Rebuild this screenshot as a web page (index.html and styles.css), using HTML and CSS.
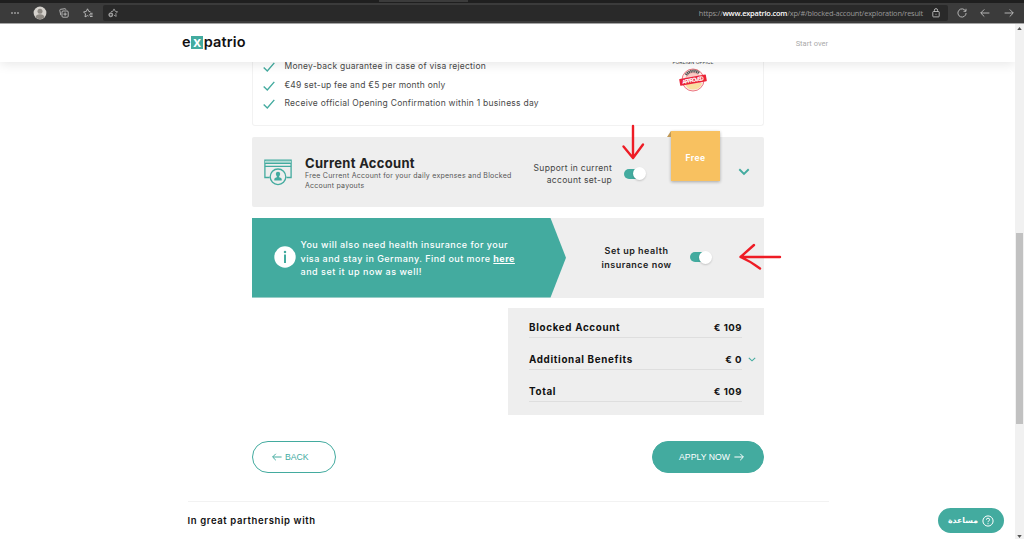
FILE: index.html
```html
<!DOCTYPE html>
<html lang="en">
<head>
<meta charset="utf-8">
<title>Expatrio</title>
<link rel="stylesheet" href="styles.css">
</head>
<body>
<div class="browser">
  <div class="tabs"><span class="tab"></span></div>
  <div class="toolbar">
    <svg class="ic dots" viewBox="0 0 10 10"><circle cx="2" cy="5" r=".8"/><circle cx="5" cy="5" r=".8"/><circle cx="8" cy="5" r=".8"/></svg>
    <svg class="avatar" viewBox="0 0 14 14"><circle cx="7" cy="7" r="6.4" fill="#d4d1cc"/><circle cx="7" cy="5.2" r="2.5" fill="#8d8983"/><path d="M2.6 11.6Q3 8.3 7 8.3T11.4 11.6Q7 15 2.6 11.6Z" fill="#8d8983"/></svg>
    <svg class="ic collections" viewBox="0 0 10 10"><rect x="3" y="3" width="6.2" height="6.2" rx="1"/><path d="M6.1 4.4v3.4M4.4 6.1h3.4M1.8 7.2 .8 2.4Q.7 1.5 1.6 1.3L6 .7q.8 0 .9 1"/></svg>
    <svg class="ic favorites" viewBox="0 0 10 10"><path d="M7.4 3.7 5.9 3.5 4.5.8 3.2 3.5.5 3.9l2 2-.5 3 2.5-1.3 1 .5M7 5.3h2.6M6 6.9h3.6M7 8.5h2.6"/></svg>
    <div class="address">
      <svg class="ic addfav" viewBox="0 0 10 10"><path d="M3 3.6 4.9 3.3 6 .9l1.2 2.4 2.4.4-1.8 1.9.4 2.8L6 7.2"/><circle cx="2.8" cy="6.8" r="2" fill="#aaa"/><path d="M2.8 5.7v2.2M1.7 6.8h2.2" stroke="#292929"/></svg>
      <span class="url">https://<b>www.expatrio.com</b>/xp/#/blocked-account/exploration/result</span>
      <svg class="ic lock" viewBox="0 0 10 10"><rect x="1.8" y="3.5" width="6.4" height="5.4" rx=".7"/><path d="M3.4 3.4V2.2a1.6 1.6 0 0 1 3.2 0v1.2M5 5.8v.9"/></svg>
    </div>
    <svg class="ic refresh" viewBox="0 0 10 10"><path d="M8.6 3A4.1 4.1 0 1 0 9.1 5M9 .8v2.5H6.5"/></svg>
    <svg class="ic back-nav" viewBox="0 0 10 10"><path d="M9.4 5H.9M4.3 1.4.7 5l3.6 3.6"/></svg>
    <svg class="ic next-nav" viewBox="0 0 10 10"><path d="M.6 5h8.5M5.7 1.4 9.3 5 5.7 8.6"/></svg>
  </div>
</div>

<div class="viewport">
  <div class="page">
    <header class="site-header">
      <div class="logo"><span>e</span><span class="logo-x">x</span><span>patrio</span></div>
      <span class="start-over">Start over</span>
    </header>

    <main class="content">
      <section class="benefits">
        <ul class="checks">
          <li><svg class="check" viewBox="0 0 12 10"><path d="M.7 5.5 4.3 8.9 11.3.9"/></svg><span class="c1">Money-back guarantee in case of visa rejection</span></li>
          <li><svg class="check" viewBox="0 0 12 10"><path d="M.7 5.5 4.3 8.9 11.3.9"/></svg><span class="c2">€49 set-up fee and €5 per month only</span></li>
          <li><svg class="check" viewBox="0 0 12 10"><path d="M.7 5.5 4.3 8.9 11.3.9"/></svg><span class="c3">Receive official Opening Confirmation within 1 business day</span></li>
        </ul>
        <div class="approval">
          <span class="office">FOREIGN OFFICE</span>
          <svg class="stamp" viewBox="0 0 30 26"><circle cx="15" cy="13" r="11" fill="#fde9e5" stroke="#ec7680"/><circle cx="15" cy="13" r="7.5" fill="#f9c9c4" stroke="#ef9797" stroke-width=".7"/><path d="M7 17a9 9 0 0 0 17-1Z" fill="#f9dda0"/><path d="M8 8a8.8 8.8 0 0 1 13-2" fill="none" stroke="#555" stroke-width="2.8" stroke-dasharray="1.4 .5"/><g transform="rotate(-10 15 13)"><rect x="1.5" y="9.7" width="27" height="6.8" rx=".6" fill="#eb2338"/><text x="15" y="15" text-anchor="middle" textLength="22" fill="#fff" font-size="5.4" font-weight="700">APPROVED</text></g></svg>
        </div>
      </section>

      <section class="account">
        <svg class="account-icon" viewBox="0 0 28 27"><path d="M5.700 18.500H.9V1.200h26.200v17.300h-4.700"/><path d="M1 2h26v2H1Z" fill="#b4ddd6" stroke="none"/><path d="M.9 4.300h26.200M.9 7.300h26.200"/><circle cx="14" cy="17.800" r="7.800" fill="#eee"/><circle cx="14" cy="15" r="2.200" fill="#43ab9f" stroke="none"/><path d="M10.300 21.500v-1.500q0-1.300 2.500-1.800v-2h2.400v2q2.500.5 2.500 1.800v1.500Z" fill="#43ab9f" stroke="none"/></svg>
        <div class="account-text">
          <h2>Current Account</h2>
          <p><span class="d1">Free Current Account for your daily expenses and Blocked</span><br><span class="d2">Account payouts</span></p>
        </div>
        <p class="support">Support in current<br>account set-up</p>
        <span class="toggle"><i></i></span>
        <svg class="chevron" viewBox="0 0 12 8"><path d="m1.3 1.3 4.7 4.6 4.7-4.6"/></svg>
        <div class="note">Free</div>
      </section>

      <section class="health">
        <div class="health-info">
          <svg class="info" viewBox="0 0 22 22"><circle cx="11" cy="11" r="10.7" fill="#fff"/><path d="M11 8.600v8.500" stroke="#43ab9f" stroke-width="2"/><circle cx="11" cy="6" r="1.250" fill="#43ab9f"/></svg>
          <p><span class="h1">You will also need health insurance for your</span><br><span class="h2">visa and stay in Germany. Find out more <a>here</a></span><br><span class="h3">and set it up now as well!</span></p>
        </div>
        <p class="setup">Set up health<br>insurance now</p>
        <span class="toggle"><i></i></span>
      </section>

      <section class="summary">
        <div class="row"><span class="label">Blocked Account</span><span>€ 109</span></div>
        <div class="row"><span class="label">Additional Benefits</span><span>€ 0</span><svg class="mini" viewBox="0 0 8 5"><path d="m.8.8 3.2 3 3.2-3"/></svg></div>
        <div class="row"><span class="label">Total</span><span>€ 109</span></div>
      </section>

      <div class="actions">
        <button class="btn outline"><svg viewBox="0 0 10 8"><path d="M9.600 4H.8M3.800.8.6 4l3.200 3.200"/></svg><span>BACK</span></button>
        <button class="btn solid"><span>APPLY NOW</span><svg viewBox="0 0 10 8"><path d="M.4 4h8.800M6.200.8 9.400 4 6.200 7.200"/></svg></button>
      </div>
    </main>

    <footer class="partners"><span>In great parthership with</span></footer>
  </div>
  <div class="scrollbar">
    <svg viewBox="0 0 6 4"><path d="M0 4 3 0l3 4Z"/></svg>
    <span class="thumb"></span>
    <svg viewBox="0 0 6 4"><path d="M0 0h6L3 4Z"/></svg>
  </div>
</div>

<svg class="mark mark-down" viewBox="0 0 24 36"><path d="M12 2v31M2.500 22.500 12 34M22 20.500 12 34"/></svg>
<svg class="mark mark-left" viewBox="0 0 44 28"><path d="M42 14H2.500M16 2 2.500 14M22 25.500Q12 18 2.500 14"/></svg>
<div class="help"><svg viewBox="0 0 12 12"><circle cx="6" cy="6" r="5.100"/><path d="M4.400 4.700Q4.400 3.200 6 3.200t1.600 1.500Q7.600 5.600 6.600 6 6 6.300 6 7.200M6 8.200v1"/></svg><span lang="ar" dir="rtl">مساعدة</span></div>
</body>
</html>
```
FILE: styles.css
```css
* { box-sizing: border-box; margin: 0; padding: 0; }
body { width: 1024px; height: 539px; overflow: hidden; display: flex; flex-direction: column; background: #fff; font-family: Inter, "Liberation Sans", sans-serif; color: #222; position: relative; white-space: nowrap; }
.browser { height: 24px; flex: none; border-bottom: 1px solid #a5a5a5; }
.tabs { height: 3px; background: #1f1f1f; display: flex; }
.tab { width: 89px; height: 2px; margin-left: 379px; background: #3b3b3b; }
.toolbar { height: 20px; background: #3b3b3b; display: flex; align-items: center; }
.ic { width: 10px; height: 10px; flex: none; fill: none; stroke: #d0d0d0; stroke-width: .8; }
.dots { margin-left: 10px; fill: #ddd; stroke: none; }
.avatar { width: 14px; height: 14px; margin-left: 13px; }
.collections { margin-left: 12px; }
.favorites { margin-left: 14px; }
.address { width: 845px; height: 16px; margin-left: 10px; background: #292929; border-radius: 2px; display: flex; align-items: center; }
.addfav { margin-left: 5px; stroke: #aaa; }
.url { margin-left: auto; margin-right: 8px; font: 7.400px "Open Sans", sans-serif; letter-spacing: -.17px; color: #999; }
.url b { color: #fff; font-weight: 600; }
.lock { margin-right: 7px; }
.refresh { margin-left: 9px; }
.back-nav { margin-left: 13px; }
.next-nav { margin-left: 14px; }
.viewport { flex: 1; display: flex; min-height: 0; }
.page { flex: 1; display: flex; flex-direction: column; }
.site-header { height: 38px; flex: none; padding: 0 187px 0 182px; display: flex; justify-content: space-between; align-items: center; background: #fff; box-shadow: 0 2px 12px rgba(0,0,0,.1); position: relative; z-index: 1; clip-path: inset(0 0 -16px 0); }
.logo { display: flex; align-items: center; font-size: 14.500px; font-weight: 600; line-height: 14px; color: #111; letter-spacing: .15px; margin-top: -2px; }
.logo-x { width: 12px; height: 13px; margin: 1px .5px 0; line-height: 12px; text-align: center; background: #43ab9f; color: #fff; letter-spacing: 0; }
.start-over { font: 7.500px Roboto, sans-serif; color: #aaa; margin-top: 1px; }
.content { width: 512px; margin-left: 252px; display: flex; flex-direction: column; }
.benefits { height: 64px; border: 1px solid #f2f2f2; border-top: 0; border-radius: 0 0 3px 3px; display: flex; justify-content: space-between; padding: 0 49px 0 10px; }
.checks { list-style: none; margin-top: -5px; font-size: 8.500px; color: #484848; }
.checks li { height: 18.600px; display: flex; align-items: center; gap: 9.500px; }
.check { width: 12px; height: 10px; margin-top: 2px; fill: none; stroke: #43ab9f; stroke-width: 1.400; }
.approval { width: 42px; margin-top: -3px; display: flex; flex-direction: column; align-items: center; font-size: 5px; line-height: 6px; color: #444; }
.stamp { width: 30px; height: 26px; margin-top: 2px; flex: none; }
.account { height: 70px; margin-top: 11px; background: #eee; border-radius: 2px; display: flex; align-items: center; position: relative; }
.account-icon { width: 28px; height: 27px; margin: 0 13px 0 12px; fill: none; stroke: #43ab9f; stroke-width: 1.300; }
.account-text { width: 210px; padding-top: 2px; }
.account-text h2 { font-size: 13px; line-height: 16px; font-weight: 700; letter-spacing: .3px; color: #222; }
.account-text p { font-size: 7px; line-height: 10px; color: #555; }
.support { width: 97px; font-size: 8.500px; line-height: 12px; text-align: right; letter-spacing: .3px; color: #444; margin-top: 3px; }
.toggle { width: 22px; height: 14px; display: flex; align-items: center; justify-content: flex-end; position: relative; flex: none; }
.toggle::before { content: ""; position: absolute; left: 0; top: 2px; width: 17px; height: 10px; border-radius: 5px; background: #43ab9f; }
.toggle i { width: 13px; height: 13px; border-radius: 50%; background: #fff; box-shadow: 0 1px 2px rgba(0,0,0,.18); position: relative; }
.account .toggle { margin: 3px 0 0 12px; }
.chevron { width: 12px; height: 8px; margin-left: 92px; fill: none; stroke: #43ab9f; stroke-width: 1.900; }
.note { position: absolute; left: 419px; top: -6px; width: 49px; height: 50px; background: #f8c160; box-shadow: 0 1px 3px rgba(0,0,0,.3); color: #fff; font-size: 8.500px; font-weight: 700; letter-spacing: .5px; line-height: 54px; text-align: center; }
.note::before { content: ""; position: absolute; left: -4px; top: 0; border-left: 4px solid transparent; border-bottom: 6px solid #c19a57; }
.health { height: 79.500px; margin-top: 11px; background: #eee; display: flex; align-items: center; }
.health-info { width: 314px; height: 79.500px; padding-left: 22px; display: flex; align-items: center; gap: 4.500px; background: #43ab9f; clip-path: polygon(0 0, 298.500px 0, 100% 50%, 298.500px 100%, 0 100%); color: #fff; font-size: 9px; line-height: 13.400px; font-weight: 500; letter-spacing: .46px; }
.info { width: 22px; height: 22px; flex: none; margin-top: -1px; }
.health-info p { margin-top: 1px; }
.health-info .h3 { letter-spacing: .52px; }
.health-info a { font-weight: 700; text-decoration: underline; }
.setup { width: 106px; padding-left: 35px; margin-right: 18px; font-size: 9px; font-weight: 600; line-height: 13.400px; letter-spacing: .5px; text-align: center; }
.health .toggle { margin-top: -1px; }
.summary { width: 256px; height: 107px; margin: 10.500px 0 0 256px; padding: 8px 22px 8px 21px; background: #eee; font-size: 9.600px; font-weight: 600; color: #111; letter-spacing: .5px; }
.row { display: flex; justify-content: space-between; align-items: center; height: 22px; margin-bottom: 10px; padding-top: 2px; border-bottom: 1px solid #dedede; position: relative; }
.row .label { font-size: 9.800px; font-weight: 700; letter-spacing: .68px; }
.row span { font-weight: 700; }
.mini { position: absolute; left: 219px; top: 9px; width: 8px; height: 5px; fill: none; stroke: #43ab9f; stroke-width: 1.100; }
.actions { margin-top: 26px; display: flex; justify-content: space-between; }
.btn { height: 32px; border-radius: 16px; border: 1px solid #43ab9f; display: flex; align-items: center; justify-content: center; gap: 4px; font: 8.700px "Liberation Sans", sans-serif; }
.btn svg { width: 10px; height: 8px; fill: none; stroke: currentColor; stroke-width: 1; }
.outline { width: 84px; background: #fff; color: #43ab9f; padding-right: 7px; gap: 2.500px; border-width: 1.500px; }
.solid { width: 112px; background: #43ab9f; color: #fff; padding-left: 7px; }
.partners { width: 641px; margin: 28px 0 0 187.500px; padding-top: 11px; border-top: 1px solid #f2f2f2; font-size: 9.500px; line-height: 16px; font-weight: 600; color: #111; letter-spacing: .62px; }
.scrollbar { width: 9px; background: #f1f1f1; display: flex; flex-direction: column; align-items: center; padding: 3px 0 1px; }
.scrollbar svg { width: 5px; height: 3px; fill: #555; }
.thumb { width: 7px; height: 191px; margin: 203px 0 auto; background: #c1c1c1; }
.mark { position: absolute; fill: none; stroke: #ee1c25; stroke-width: 2.400; stroke-linecap: round; stroke-linejoin: round; }
.mark-down { left: 620.500px; top: 124px; width: 24px; height: 36px; }
.mark-left { left: 737.500px; top: 243px; width: 44px; height: 28px; }
.help { position: absolute; left: 938px; top: 508px; width: 66px; height: 25px; border-radius: 13px; background: #43ab9f; color: #fff; display: flex; flex-direction: row-reverse; align-items: center; justify-content: center; gap: 4px; font: bold 7.800px "DejaVu Sans", sans-serif; }
.help svg { width: 12px; height: 12px; fill: none; stroke: #fff; stroke-width: 1; }
.c1 { letter-spacing: .23px; }
.c2 { letter-spacing: .2px; }
.c3 { letter-spacing: .26px; }
.d1, .d2 { letter-spacing: .24px; }
```
